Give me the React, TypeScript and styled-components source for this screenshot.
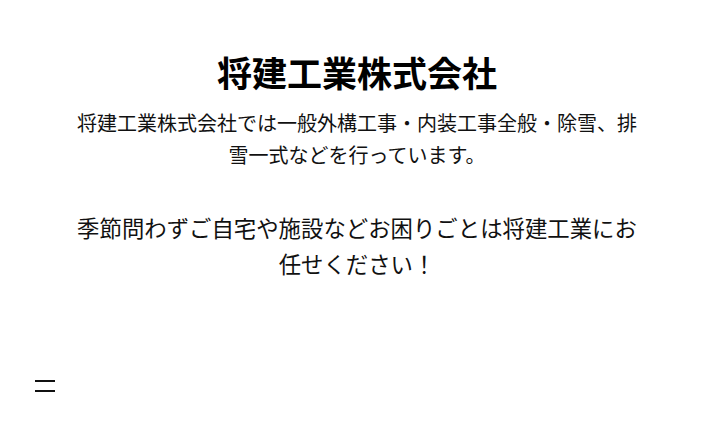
import React from "react";
import styled, { createGlobalStyle } from "styled-components";

const Global = createGlobalStyle`
  html, body { margin: 0; padding: 0; background: #fff; }
  body { font-family: "Noto Sans CJK JP", "Noto Sans", sans-serif; color: #111; }
`;

const Page = styled.main`
  width: 714px;
  height: 423px;
  box-sizing: border-box;
  display: flex;
  flex-direction: column;
  padding: 46px 0 0;
  position: relative;
`;

const Content = styled.section`
  padding: 0 72px;
  text-align: center;
`;

const Title = styled.h1`
  margin: 0 0 9px;
  font-size: 35px;
  font-weight: 700;
  line-height: 52px;
  color: #000;
`;

const Lead = styled.p<{ $size: number; $lh: number; $mb: number }>`
  margin: 0 0 ${(p) => p.$mb}px;
  font-size: ${(p) => p.$size}px;
  line-height: ${(p) => p.$lh}px;
`;

const Menu = styled.button`
  position: absolute;
  left: 35px;
  top: 380px;
  width: 20px;
  height: 12px;
  padding: 0;
  border: 0;
  background: transparent;
  display: flex;
  flex-direction: column;
  justify-content: space-between;
`;

const Bar = styled.span`
  display: block;
  width: 20px;
  height: 2px;
  background: #111;
`;

export default function App() {
  return (
    <>
      <Global />
      <Page>
        <Content>
          <Title>将建工業株式会社</Title>
          <Lead $size={20} $lh={32} $mb={38}>
            将建工業株式会社では一般外構工事・内装工事全般・除雪、排雪一式などを行っています。
          </Lead>
          <Lead $size={22.4} $lh={36} $mb={0}>
            季節問わずご自宅や施設などお困りごとは将建工業にお任せください！
          </Lead>
        </Content>
        <Menu aria-label="menu">
          <Bar />
          <Bar />
        </Menu>
      </Page>
    </>
  );
}
